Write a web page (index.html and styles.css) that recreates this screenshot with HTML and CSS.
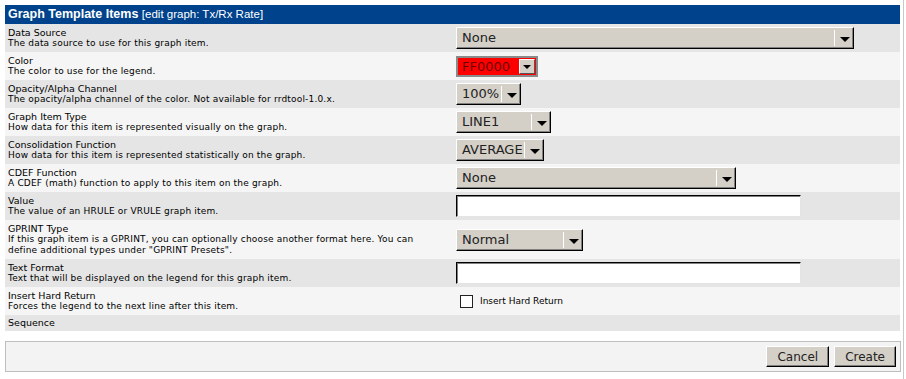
FILE: index.html
```html
<!DOCTYPE html>
<html lang="en">
<head>
  <meta charset="UTF-8">
  <title>Graph Template Items</title>
  <link rel="stylesheet" href="styles.css">
</head>
<body>
  <div class="page">
    <table class="items">
      <tr class="title">
        <td colspan="2"><b>Graph Template Items</b> <span class="sub">[edit graph: Tx/Rx Rate]</span></td>
      </tr>
      <tr class="odd">
        <td class="desc"><span class="name">Data Source</span>The data source to use for this graph item.</td>
        <td><span class="sel w-ds"><span class="val">None</span><span class="arrow"></span></span></td>
      </tr>
      <tr class="even">
        <td class="desc"><span class="name">Color</span>The color to use for the legend.</td>
        <td><span class="sel color"><span class="val">FF0000</span><span class="arrow"></span></span></td>
      </tr>
      <tr class="odd">
        <td class="desc"><span class="name">Opacity/Alpha Channel</span>The opacity/alpha channel of the color. Not available for rrdtool-1.0.x.</td>
        <td><span class="sel w-op"><span class="val">100%</span><span class="arrow"></span></span></td>
      </tr>
      <tr class="even">
        <td class="desc"><span class="name">Graph Item Type</span>How data for this item is represented visually on the graph.</td>
        <td><span class="sel w-type"><span class="val">LINE1</span><span class="arrow"></span></span></td>
      </tr>
      <tr class="odd">
        <td class="desc"><span class="name">Consolidation Function</span>How data for this item is represented statistically on the graph.</td>
        <td><span class="sel w-cf"><span class="val">AVERAGE</span><span class="arrow"></span></span></td>
      </tr>
      <tr class="even">
        <td class="desc"><span class="name">CDEF Function</span>A CDEF (math) function to apply to this item on the graph.</td>
        <td><span class="sel w-cdef"><span class="val">None</span><span class="arrow"></span></span></td>
      </tr>
      <tr class="odd">
        <td class="desc"><span class="name">Value</span>The value of an HRULE or VRULE graph item.</td>
        <td><input class="txt" type="text"></td>
      </tr>
      <tr class="even">
        <td class="desc"><span class="name">GPRINT Type</span>If this graph item is a GPRINT, you can optionally choose another format here. You can define additional types under "GPRINT Presets".</td>
        <td><span class="sel w-gp"><span class="val">Normal</span><span class="arrow"></span></span></td>
      </tr>
      <tr class="odd">
        <td class="desc"><span class="name">Text Format</span>Text that will be displayed on the legend for this graph item.</td>
        <td><input class="txt" type="text"></td>
      </tr>
      <tr class="even">
        <td class="desc"><span class="name">Insert Hard Return</span>Forces the legend to the next line after this item.</td>
        <td><label class="check"><span class="box"></span>Insert Hard Return</label></td>
      </tr>
      <tr class="odd seq">
        <td class="desc"><span class="name">Sequence</span></td>
        <td></td>
      </tr>
    </table>

    <div class="save_row">
      <button class="btn">Cancel</button>
      <button class="btn">Create</button>
    </div>
  </div>
</body>
</html>
```

FILE: styles.css
```css
*{
  margin: 0;
  padding: 0;
  box-sizing: border-box;
}

body{
  font-family: "DejaVu Sans", Verdana, sans-serif;
  font-size: 9px;
  color: #000;
  background: #fff;
}

.page{
  min-height: 100vh;
  width: 904px;
  padding: 5px 3px 5px 5px;
  border-right: 1px solid #c8c8c8;
}

.items{
  width: 895px;
  border-collapse: collapse;
}

.items td{
  vertical-align: middle;
  padding: 3px 3px;
  line-height: 11px;
  letter-spacing: 0.18px;
}

.items .title td{
  background: #00438c;
  color: #fff;
  font-family: "Liberation Sans", Arial, sans-serif;
  font-size: 12.5px;
  line-height: 13px;
  letter-spacing: 0;
  padding: 3px 3px;
}
.title .sub{
  font-size: 11.5px;
}

.odd{
  background: #e5e5e5;
}
.even{
  background: #f5f5f5;
}

.items td.desc{
  width: 448px;
  padding-right: 12px;
}

.name{
  display: block;
  font-size: 9.5px;
  line-height: 11px;
  letter-spacing: 0;
}

.seq td{
  padding: 2px 3px 3px;
}

/* fake select boxes */
.sel{
  display: flex;
  align-items: stretch;
  height: 22px;
  background: #d4d0c8;
  border: 1px solid;
  border-color: #fff #000 #000 #fff;
  box-shadow: inset -1px -1px 0 #808080;
  font-size: 13px;
  letter-spacing: 0;
  color: #222;
}
.sel .val{
  flex: 1;
  padding-left: 5px;
  line-height: 20px;
  white-space: nowrap;
}
.sel .arrow{
  width: 19px;
  border-left: 1px solid #fff;
  margin: 2px 0;
  position: relative;
}
.sel .arrow::after{
  content: "";
  position: absolute;
  left: 5px;
  top: 7px;
  border-left: 5px solid transparent;
  border-right: 5px solid transparent;
  border-top: 5px solid #000;
}

.w-ds{ width: 398px; }
.w-op{ width: 65px; }
.w-type{ width: 95px; }
.w-cf{ width: 88px; }
.w-cdef{ width: 280px; }
.w-gp{ width: 127px; }

.sel.color{
  width: 82px;
  height: 21px;
  background: #ff0000;
  color: #6a0000;
  border: 2px solid #8a8a8a;
  box-shadow: none;
  padding-right: 1px;
}
.sel.color .val{
  line-height: 17px;
  padding-left: 4px;
}
.sel.color .arrow{
  width: 16px;
  margin: 1px 0;
  background: #d4d0c8;
  border: 1px solid;
  border-color: #fff #555 #555 #fff;
}
.sel.color .arrow::after{
  left: 3px;
  top: 5px;
  border-left-width: 4px;
  border-right-width: 4px;
  border-top-width: 4px;
}

.txt{
  display: block;
  width: 345px;
  height: 22px;
  background: #fff;
  border: 1px solid;
  border-color: #000 #e4e4e4 #e4e4e4 #000;
  box-shadow: inset 1px 1px 0 #808080;
}

.check{
  display: flex;
  align-items: center;
  gap: 7px;
  padding-left: 4px;
  font-size: 9px;
  letter-spacing: 0;
}
.check .box{
  width: 13px;
  height: 13px;
  border: 1px solid #222;
  background: #fff;
}

.save_row{
  margin-top: 10px;
  width: 896px;
  height: 31px;
  display: flex;
  justify-content: flex-end;
  align-items: center;
  gap: 5px;
  padding-right: 4px;
  background: #f3f3f3;
  border: 1px solid #bebebe;
}

.btn{
  height: 21px;
  padding: 0 10px;
  background: #d4d0c8;
  border: 1px solid;
  border-color: #fff #000 #000 #fff;
  box-shadow: inset -1px -1px 0 #808080;
  font-family: "DejaVu Sans", sans-serif;
  font-size: 12px;
  color: #222;
}
```
